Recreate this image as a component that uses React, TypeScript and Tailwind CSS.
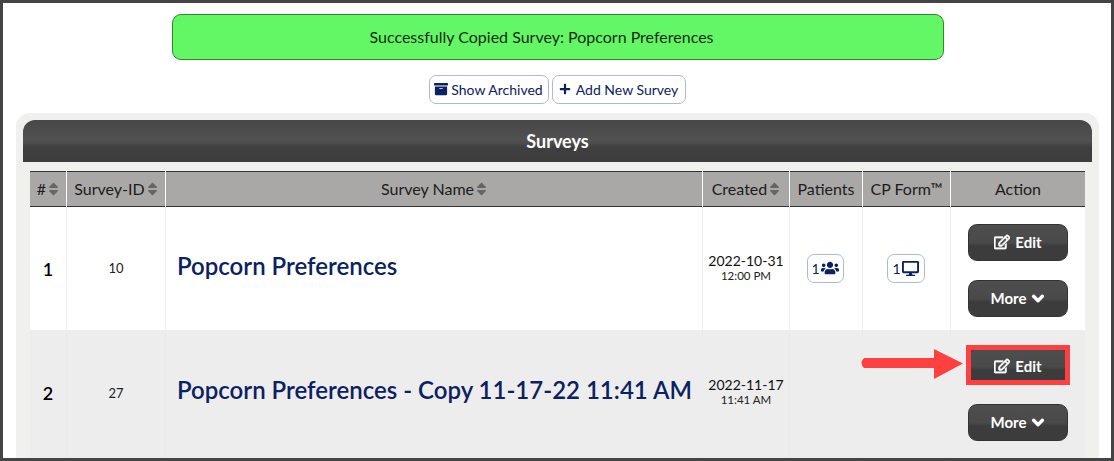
import { FaArchive, FaChevronDown, FaDesktop, FaPlus, FaRegEdit, FaSort, FaUsers } from "react-icons/fa";

const gridCols = "grid grid-cols-[36px_98px_536px_86px_72px_87px_134px] gap-x-[1px]";

const SmallButton = ({ children, className = "" }: { children: React.ReactNode; className?: string }) => (
  <div className={`flex h-[29px] items-center justify-center rounded-[7px] border border-[#a9bcd4] bg-white pb-[1px] text-[14px] text-[#0b2161] ${className}`}>
    {children}
  </div>
);

const DarkButton = ({ children }: { children: React.ReactNode }) => (
  <div className="flex h-[37px] w-[100px] items-center justify-center gap-[5px] rounded-[9px] border border-[#333] bg-[linear-gradient(#4e4e4e_0%,#4a4a4a_50%,#3c3c3c_60%,#3c3c3c_100%)] text-[15px] font-bold text-white">
    {children}
  </div>
);

const HeadCell = ({ label, sort }: { label: React.ReactNode; sort?: boolean }) => (
  <div className="flex items-center justify-center gap-[2px] border-y border-t-[#333] border-b-[#333] bg-[#aaa8a6] text-[16px] text-[#1c1c1c]">
    {label}
    {sort && <FaSort className="h-[16px] w-[11px] text-[#666]" />}
  </div>
);

const Row = ({ num, id, name, date, time, tinted, extras }: {
  num: string; id: string; name: string; date: string; time: string; tinted?: boolean; extras?: boolean;
}) => {
  const cell = `flex items-center justify-center ${tinted ? "bg-[#ededed]" : "bg-white"}`;
  return (
    <div className={`${gridCols} ${tinted ? "h-[127px] bg-[#eaeaea]" : "h-[123px] bg-[#eeeeec]"}`}>
      <div className={`${cell} text-[18px] font-semibold text-black ${tinted ? "pb-[2px]" : "pt-[2px]"}`}>{num}</div>
      <div className={`${cell} text-[13px] text-[#222] ${tinted ? "pb-[2px]" : ""}`}>{id}</div>
      <div className={`${cell} justify-start pl-[11px] text-[24px] font-semibold whitespace-nowrap text-[#0b2161] ${tinted ? "pb-[10px]" : "pb-[6px]"}`}>{name}</div>
      <div className={`${cell} flex-col leading-none ${tinted ? "pb-[6px]" : "pb-[1px]"}`}>
        <span className="text-[14px] text-[#111]">{date}</span>
        <span className="mt-[2px] text-[11.5px] text-[#222]">{time}</span>
      </div>
      <div className={`${cell} pr-[2px]`}>
        {extras && (
          <SmallButton className="w-[37px] gap-[1px]">
            1<FaUsers className="h-[18px] w-[18px]" />
          </SmallButton>
        )}
      </div>
      <div className={`${cell} pr-[2px]`}>
        {extras && (
          <SmallButton className="w-[38px] gap-[1px]">
            1<FaDesktop className="h-[17px] w-[17px]" />
          </SmallButton>
        )}
      </div>
      <div className={`${cell} relative flex-col gap-[19px] ${tinted ? "pb-[1px]" : "pt-[3px]"}`}>
        <DarkButton>
          <FaRegEdit className="h-[16px] w-[16px]" stroke="currentColor" strokeWidth={24} /> Edit
        </DarkButton>
        <DarkButton>
          More <FaChevronDown className="h-[13px] w-[14px]" stroke="currentColor" strokeWidth={50} />
        </DarkButton>
        {tinted && (
          <>
            <div className="absolute top-[14px] left-[15px] h-[40px] w-[104px] border-[5px] border-[#ff4040]" />
            <svg className="absolute top-[18px] left-[-92px]" width="104" height="30" viewBox="0 0 104 30">
              <path d="M5 9 H75 V0 L104 14.5 L75 30 V19 L5 19 Q0 14 5 9 Z" fill="#ff4040" />
            </svg>
          </>
        )}
      </div>
    </div>
  );
};

export default function App() {
  return (
    <div className="h-[461px] w-[1114px] overflow-hidden border-[3px] border-[#444] bg-white font-['Lato','Open_Sans',sans-serif]">
      <div className="flex flex-col items-center pt-[11px] pl-[1px]">
        <div className="flex h-[46px] w-[772px] items-center justify-center rounded-[9px] border border-[#2c8a2c] bg-[#63f765] pr-[32px] text-[16px] text-[#1a2a1a]">
          Successfully Copied Survey: Popcorn Preferences
        </div>
        <div className="mt-[15px] flex gap-[3px] pr-[1px]">
          <SmallButton className="w-[120px] gap-[3px]">
            <FaArchive className="h-[14px] w-[14px]" /> Show Archived
          </SmallButton>
          <SmallButton className="w-[134px] gap-[5px]">
            <FaPlus className="h-[12px] w-[12px]" /> Add New Survey
          </SmallButton>
        </div>
      </div>
      <div className="mt-[9px] ml-[13px] h-[400px] w-[1083px] rounded-t-[14px] bg-[#f0f0ec] px-[7px] pt-[7px]">
        <div className="flex h-[42px] items-center justify-center rounded-t-[12px] bg-[linear-gradient(#484848_0%,#515151_50%,#3f3f3f_65%,#3d3d3d_100%)] text-[18px] font-bold text-white">
          Surveys
        </div>
        <div className="mx-[7px] mt-[9px]">
          <div className={`${gridCols} h-[36px] bg-white`}>
            <HeadCell label="#" sort />
            <HeadCell label="Survey-ID" sort />
            <HeadCell label="Survey Name" sort />
            <HeadCell label="Created" sort />
            <HeadCell label="Patients" />
            <HeadCell label="CP Form™" />
            <HeadCell label="Action" />
          </div>
          <Row num="1" id="10" name="Popcorn Preferences" date="2022-10-31" time="12:00 PM" extras />
          <div className="h-[1px] bg-[#eeeeee]" />
          <Row num="2" id="27" name="Popcorn Preferences - Copy 11-17-22 11:41 AM" date="2022-11-17" time="11:41 AM" tinted />
        </div>
      </div>
    </div>
  );
}
